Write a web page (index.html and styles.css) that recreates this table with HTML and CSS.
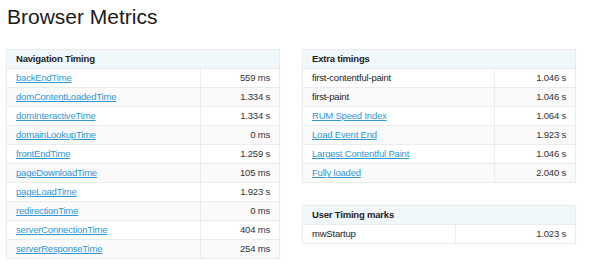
FILE: index.html
```html
<!DOCTYPE html>
<html>
<head>
<meta charset="utf-8">
<link rel="stylesheet" href="styles.css">
</head>
<body>
<h1 class="title">Browser Metrics</h1>
<div class="columns">
  <div class="col">
    <table class="metrics">
      <thead><tr><th colspan="2">Navigation Timing</th></tr></thead>
      <tbody>
        <tr><td><a href="#">backEndTime</a></td><td class="val">559 ms</td></tr>
        <tr><td><a href="#">domContentLoadedTime</a></td><td class="val">1.334 s</td></tr>
        <tr><td><a href="#">domInteractiveTime</a></td><td class="val">1.334 s</td></tr>
        <tr><td><a href="#">domainLookupTime</a></td><td class="val">0 ms</td></tr>
        <tr><td><a href="#">frontEndTime</a></td><td class="val">1.259 s</td></tr>
        <tr><td><a href="#">pageDownloadTime</a></td><td class="val">105 ms</td></tr>
        <tr><td><a href="#">pageLoadTime</a></td><td class="val">1.923 s</td></tr>
        <tr><td><a href="#">redirectionTime</a></td><td class="val">0 ms</td></tr>
        <tr><td><a href="#">serverConnectionTime</a></td><td class="val">404 ms</td></tr>
        <tr><td><a href="#">serverResponseTime</a></td><td class="val">254 ms</td></tr>
      </tbody>
    </table>
  </div>
  <div class="col">
    <table class="metrics">
      <thead><tr><th colspan="2">Extra timings</th></tr></thead>
      <tbody>
        <tr><td>first-contentful-paint</td><td class="val">1.046 s</td></tr>
        <tr><td>first-paint</td><td class="val">1.046 s</td></tr>
        <tr><td><a href="#">RUM Speed Index</a></td><td class="val">1.064 s</td></tr>
        <tr><td><a href="#">Load Event End</a></td><td class="val">1.923 s</td></tr>
        <tr><td><a href="#">Largest Contentful Paint</a></td><td class="val">1.046 s</td></tr>
        <tr><td><a href="#">Fully loaded</a></td><td class="val">2.040 s</td></tr>
      </tbody>
    </table>
    <table class="metrics">
      <thead><tr><th colspan="2">User Timing marks</th></tr></thead>
      <tbody>
        <tr><td>mwStartup</td><td class="val">1.023 s</td></tr>
      </tbody>
    </table>
  </div>
</div>
</body>
</html>
```
FILE: styles.css
```css
html, body {
  margin: 0;
  padding: 0;
  background: #ffffff;
}
body {
  font-family: "Liberation Sans", Arial, sans-serif;
  color: #222;
  padding: 0 6px;
}
.title {
  font-size: 21px;
  font-weight: 300;
  margin: 0;
  padding: 5px 0 0 1px;
  line-height: 24px;
  height: 44px;
  color: #1a1a1a;
}
.columns {
  display: flex;
  gap: 22px;
  align-items: flex-start;
}
.col {
  width: 274px;
  display: flex;
  flex-direction: column;
  gap: 22px;
}
.metrics {
  width: 274px;
  border-collapse: collapse;
  font-size: 9.5px;
  letter-spacing: -0.2px;
  border: 1px solid #ebebeb;
  box-shadow: 0 0 2px rgba(0,0,0,0.04);
}
.metrics th {
  text-align: left;
  font-weight: bold;
  background: #f1f8fc;
  padding: 3px 9px;
  height: 12px;
  line-height: 12px;
  color: #222;
}
.metrics td {
  padding: 3px 9px;
  height: 12px;
  line-height: 12px;
  border-top: 1px solid #ececec;
}
.metrics td + td {
  border-left: 1px solid #ececec;
}
.metrics tbody tr:nth-child(even) td {
  background: #fafafa;
}
.metrics .val {
  text-align: right;
  color: #333;
}
.metrics a {
  color: #3197d4;
  text-decoration: underline;
}
```
